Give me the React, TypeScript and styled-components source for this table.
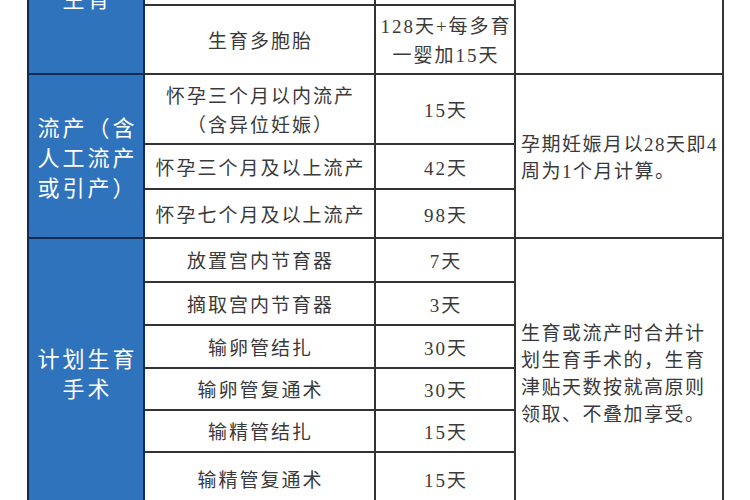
import { createGlobalStyle, styled } from "styled-components";

const GlobalStyle = createGlobalStyle`
  html, body {
    margin: 0;
    padding: 0;
    background: #fff;
    overflow: hidden;
  }
`;

const Page = styled.div`
  width: 750px;
  height: 500px;
  overflow: hidden;
  padding-left: 27px;
  box-sizing: border-box;
`;

const Table = styled.table`
  margin-top: -81px;
  border-collapse: collapse;
  table-layout: fixed;
  width: 697px;
  font-family: "Liberation Serif", "Noto Sans CJK SC", serif;
  color: #3a3a3a;
`;

const Row = styled.tr<{ $h: number }>`
  height: ${p => p.$h}px;
`;

const Category = styled.td`
  background: #3073bd;
  border: 2px solid #112c4f;
  color: #fff;
  font-family: "Noto Sans CJK SC", sans-serif;
  font-size: 22px;
  letter-spacing: 3px;
  line-height: 30px;
  text-align: center;
  vertical-align: middle;
  padding: 0 0 0 3px;
`;

const Cell = styled.td`
  border: 2px solid #333;
  font-size: 19px;
  letter-spacing: 2px;
  line-height: 29px;
  text-align: center;
  vertical-align: middle;
  padding: 3px 0 0 2px;
`;

const Note = styled(Cell)`
  text-align: left;
  letter-spacing: 1.5px;
  line-height: 27px;
  padding: 4px 0 0 5px;
`;

const Line = styled.span`
  display: block;
  white-space: nowrap;
`;

type Item = { item: string[]; days: string[]; h: number };
type Section = { title: string[]; note: string[]; rows: Item[] };

// the first two rows of the 生育 block sit above the visible area
const sections: Section[] = [
  {
    title: ["生育"],
    note: [],
    rows: [
      { item: [], days: [], h: 42 },
      { item: [], days: [], h: 43 },
      { item: ["生育多胞胎"], days: ["128天+每多育", "一婴加15天"], h: 69 },
    ],
  },
  {
    title: ["流产（含", "人工流产", "或引产）"],
    note: ["孕期妊娠月以28天即4", "周为1个月计算。"],
    rows: [
      { item: ["怀孕三个月以内流产", "（含异位妊娠）"], days: ["15天"], h: 70 },
      { item: ["怀孕三个月及以上流产"], days: ["42天"], h: 45 },
      { item: ["怀孕七个月及以上流产"], days: ["98天"], h: 49 },
    ],
  },
  {
    title: ["计划生育", "手术"],
    note: ["生育或流产时合并计", "划生育手术的，生育", "津贴天数按就高原则", "领取、不叠加享受。"],
    rows: [
      { item: ["放置宫内节育器"], days: ["7天"], h: 44 },
      { item: ["摘取宫内节育器"], days: ["3天"], h: 43 },
      { item: ["输卵管结扎"], days: ["30天"], h: 43 },
      { item: ["输卵管复通术"], days: ["30天"], h: 42 },
      { item: ["输精管结扎"], days: ["15天"], h: 42 },
      { item: ["输精管复通术"], days: ["15天"], h: 53 },
    ],
  },
];

const lines = (list: string[]) => list.map(t => <Line key={t}>{t}</Line>);

export default function App() {
  return (
    <Page>
      <GlobalStyle />
      <Table>
        <colgroup>
          <col style={{ width: 116 }} />
          <col style={{ width: 231 }} />
          <col style={{ width: 140 }} />
          <col style={{ width: 208 }} />
        </colgroup>
        <tbody>
          {sections.map(sec =>
            sec.rows.map((r, i) => (
              <Row key={sec.title[0] + i} $h={r.h}>
                {i === 0 && <Category rowSpan={sec.rows.length}>{lines(sec.title)}</Category>}
                <Cell>{lines(r.item)}</Cell>
                <Cell>{lines(r.days)}</Cell>
                {i === 0 && <Note rowSpan={sec.rows.length}>{lines(sec.note)}</Note>}
              </Row>
            ))
          )}
        </tbody>
      </Table>
    </Page>
  );
}
